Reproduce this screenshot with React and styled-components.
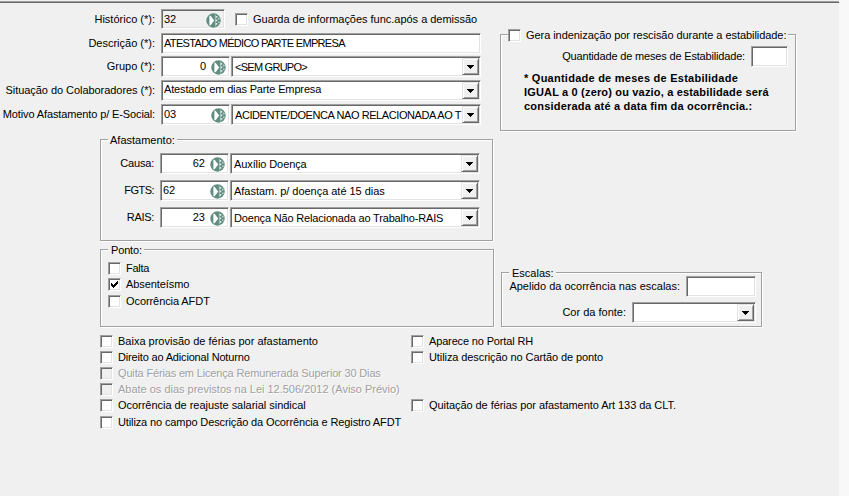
import styled, { createGlobalStyle } from "styled-components";

const LookupIcon = () => (
  <Lookup viewBox="0 0 15 15" aria-hidden="true">
    <circle cx="7.5" cy="7.5" r="7.2" fill="#5f8c7f" />
    <path d="M3.4 2.8 L4.6 2.8 L8.2 7.5 L4.6 12.2 L3.4 12.2 Z" fill="#fff" />
    <path d="M9.4 1.6 V13.4" stroke="#b9cec7" strokeWidth="0.8" />
    <path
      d="M9.8 3h1.5v1.7H9.8zM9.8 6.5h1.5v1.8H9.8zM9.8 10.1h1.5v1.7H9.8zM12.3 4.8h1.1v1.6h-1.1zM12.3 8.4h1.1v1.6h-1.1z"
      fill="#e4edea"
    />
  </Lookup>
);

const Check = ({ label, track, checked, disabled, row, column }) => (
  <CheckLabel $disabled={disabled} $row={row} $column={column}>
    <CheckBox $disabled={disabled}>
      {checked && (
        <svg width="7" height="7" viewBox="0 0 7 7" shapeRendering="crispEdges">
          <path
            d="M0 2h1v1h1v1h1V3h1V2h1V1h1V0h1v3H6v1H5v1H4v1H3v1H2V6H1V5H0z"
            fill="#000"
          />
        </svg>
      )}
    </CheckBox>
    <Text $track={track}>{label}</Text>
  </CheckLabel>
);

const Combo = ({ value, track, width, lift }) => (
  <Field $width={width}>
    <ComboText $track={track} $lift={lift}>
      {value}
    </ComboText>
    <ComboButton>
      <svg width="7" height="4" viewBox="0 0 7 4" shapeRendering="crispEdges">
        <path d="M0 0h7v1H6v1H5v1H4v1H3V3H2V2H1V1H0z" fill="#000" />
      </svg>
    </ComboButton>
  </Field>
);

const Code = ({ value, alignRight, disabled, width, height }) => (
  <Field $width={width} $height={height} $disabled={disabled}>
    <CodeText $right={alignRight}>{value}</CodeText>
    <LookupIcon />
  </Field>
);

const App = () => (
  <>
    <GlobalStyle />
    <Page>
      <Panel>
        <Columns>
          <LeftColumn>
            <Row $height={24}>
              <Label>Histórico (*):</Label>
              <Code value="32" width={64} height={20} disabled />
              <RowCheck>
                <Check label="Guarda de informações func.após a demissão" track={-0.02} />
              </RowCheck>
            </Row>
            <Row $height={23}>
              <Label>Descrição (*):</Label>
              <Field $width={320}>
                <CodeText $track={-0.67}>ATESTADO MÉDICO PARTE EMPRESA</CodeText>
              </Field>
            </Row>
            <Row $height={24}>
              <Label>Grupo (*):</Label>
              <Code value="0" width={69} alignRight />
              <Combo value="<SEM GRUPO>" track={-0.74} width={250} />
            </Row>
            <Row $height={24}>
              <Label $track={-0.05}>Situação do Colaboradores (*):</Label>
              <Combo value="Atestado em dias Parte Empresa" track={-0.14} width={320} lift />
            </Row>
            <Row $height={21}>
              <Label $track={-0.12}>Motivo Afastamento p/ E-Social:</Label>
              <Code value="03" width={69} />
              <Combo
                value="ACIDENTE/DOENCA NAO RELACIONADA AO T"
                track={-0.42}
                width={250}
              />
            </Row>

            <LeaveGroup>
              <Legend>Afastamento:</Legend>
              <LeaveRows>
                <Row $height={21}>
                  <Label $width={53} $track={-0.2}>Causa:</Label>
                  <Code value="62" width={69} alignRight />
                  <Combo value="Auxílio Doença" track={-0.1} width={250} />
                </Row>
                <Row $height={21}>
                  <Label $width={53} $track={-0.55}>FGTS:</Label>
                  <Code value="62" width={69} />
                  <Combo value="Afastam. p/ doença até 15 dias" track={-0.03} width={250} />
                </Row>
                <Row $height={21}>
                  <Label $width={53} $track={-0.3}>RAIS:</Label>
                  <Code value="23" width={69} alignRight />
                  <Combo
                    value="Doença Não Relacionada ao Trabalho-RAIS"
                    track={-0.17}
                    width={250}
                  />
                </Row>
              </LeaveRows>
            </LeaveGroup>

            <ClockGroup>
              <WideLegend $track={-0.15}>Ponto:</WideLegend>
              <ClockChecks>
                <Check label="Falta" track={-0.3} />
                <Check label="Absenteísmo" track={-0.08} checked />
                <Check label="Ocorrência AFDT" track={-0.08} />
              </ClockChecks>
            </ClockGroup>
          </LeftColumn>

          <RightColumn>
            <StabilityGroup>
              <CheckLegend>
                <Check
                  label="Gera indenização por rescisão durante a estabilidade:"
                  track={-0.06}
                />
              </CheckLegend>
              <MonthsRow>
                <Label $track={-0.17}>Quantidade de meses de Estabilidade:</Label>
                <Field $width={37} />
              </MonthsRow>
              <Note>
                <NoteLine $track={0.25}>* Quantidade de meses de Estabilidade</NoteLine>
                <NoteLine $track={0.17}>
                  IGUAL a 0 (zero) ou vazio, a estabilidade será
                </NoteLine>
                <NoteLine $track={0.2}>considerada até a data fim da ocorrência.:</NoteLine>
              </Note>
            </StabilityGroup>

            <ScheduleGroup>
              <WideLegend>Escalas:</WideLegend>
              <ScheduleRows>
                <Row $height={26}>
                  <Label $width={178}>Apelido da ocorrência nas escalas:</Label>
                  <Field $width={70} />
                </Row>
                <Row $height={21}>
                  <Label $width={124}>Cor da fonte:</Label>
                  <Combo width={124} />
                </Row>
              </ScheduleRows>
            </ScheduleGroup>
          </RightColumn>
        </Columns>

        <Options>
          <Check label="Baixa provisão de férias por afastamento" row={1} />
          <Check label="Aparece no Portal RH" track={-0.15} row={1} column={2} />
          <Check label="Direito ao Adicional Noturno" track={-0.17} row={2} />
          <Check
            label="Utiliza descrição no Cartão de ponto"
            track={-0.09}
            row={2}
            column={2}
          />
          <Check
            label="Quita Férias em Licença Remunerada Superior 30 Dias"
            track={-0.16}
            row={3}
            disabled
          />
          <Check
            label="Abate os dias previstos na Lei 12.506/2012 (Aviso Prévio)"
            track={-0.01}
            row={4}
            disabled
          />
          <Check label="Ocorrência de reajuste salarial sindical" track={-0.03} row={5} />
          <Check
            label="Quitação de férias por afastamento Art 133 da CLT."
            track={-0.06}
            row={5}
            column={2}
          />
          <Check
            label="Utiliza no campo Descrição da Ocorrência e Registro AFDT"
            track={-0.12}
            row={6}
          />
        </Options>
      </Panel>
    </Page>
  </>
);

const GlobalStyle = createGlobalStyle`
  * {
    box-sizing: border-box;
  }

  body {
    margin: 0;
    background: #f8f8f8;
    color: #000;
    font-family: "Liberation Sans", Arial, sans-serif;
    font-size: 11px;
    line-height: 13px;
  }
`;

const Page = styled.div`
  width: 849px;
  height: 496px;
  overflow: hidden;
  padding-right: 10px;
`;

const Panel = styled.main`
  height: 100%;
  background: #f0f0f0;
  border-top: 1px solid #f0f0f0;
  box-shadow: inset 0 1px 0 #a0a0a0, inset 0 2px 0 #696969;
  padding-top: 2px;
`;

const Columns = styled.div`
  display: flex;
  height: 332px;
`;

const LeftColumn = styled.div`
  width: 500px;
  padding-top: 6px;
`;

const RightColumn = styled.div`
  padding-top: 31px;
`;

const Row = styled.div`
  display: flex;
  align-items: flex-start;
  height: ${({ $height }) => $height}px;
`;

const Text = styled.span`
  letter-spacing: ${({ $track }) => $track || 0}px;
  white-space: nowrap;
`;

const Label = styled(Text)`
  width: ${({ $width }) => $width || 155}px;
  margin-right: 6px;
  padding-top: 4px;
  flex-shrink: 0;
  text-align: right;
`;

const Field = styled.div`
  display: flex;
  flex-shrink: 0;
  width: ${({ $width }) => $width}px;
  height: ${({ $height }) => $height || 21}px;
  padding: 1px;
  border: 1px solid;
  border-color: #a0a0a0 #fff #fff #a0a0a0;
  box-shadow: inset 1px 1px 0 #696969, inset -1px -1px 0 #e3e3e3;
  background: ${({ $disabled }) => ($disabled ? "#f0f0f0" : "#fff")};

  & + & {
    margin-left: 1px;
  }
`;

const CodeText = styled(Text)`
  flex: 1;
  padding: 2px 5px 0 1px;
  text-align: ${({ $right }) => ($right ? "right" : "left")};
`;

const Lookup = styled.svg`
  width: 15px;
  height: 15px;
  margin: 2px 2px 0 0;
  flex-shrink: 0;
`;

const ComboText = styled(Text)`
  flex: 1;
  min-width: 0;
  overflow: hidden;
  padding: ${({ $lift }) => ($lift ? "1px 0 0 1px" : "3px 0 0 2px")};
`;

const ComboButton = styled.div`
  display: flex;
  align-items: center;
  justify-content: center;
  width: 17px;
  height: 17px;
  flex-shrink: 0;
  border: 1px solid;
  border-color: #e3e3e3 #696969 #696969 #e3e3e3;
  box-shadow: inset 1px 1px 0 #fff, inset -1px -1px 0 #a0a0a0;
  background: #f0f0f0;
`;

const RowCheck = styled.div`
  margin: 4px 0 0 10px;
`;

const CheckLabel = styled.label`
  display: flex;
  gap: 5px;
  height: 13px;
  color: ${({ $disabled }) => ($disabled ? "#a0a0a0" : "inherit")};
  text-shadow: ${({ $disabled }) => ($disabled ? "1px 1px 0 #fff" : "none")};
  ${({ $row, $column }) => $row && `grid-area: ${$row} / ${$column || 1};`}
`;

const CheckBox = styled.span`
  display: flex;
  align-items: center;
  justify-content: center;
  width: 13px;
  height: 13px;
  flex-shrink: 0;
  border: 1px solid;
  border-color: #a0a0a0 #fff #fff #a0a0a0;
  box-shadow: inset 1px 1px 0 #696969, inset -1px -1px 0 #e3e3e3;
  background: ${({ $disabled }) => ($disabled ? "#f0f0f0" : "#fff")};
`;

const GroupBox = styled.section`
  display: flex;
  flex-direction: column;
  border: 1px solid #a0a0a0;
  box-shadow: 1px 1px 0 #fff, inset 1px 1px 0 #fff;
`;

const Legend = styled(Text)`
  align-self: flex-start;
  height: 13px;
  margin: -6px 0 0 7px;
  padding: 0 2px;
  background: #f0f0f0;
`;

const WideLegend = styled(Legend)`
  padding-left: 3px;
`;

const CheckLegend = styled.div`
  align-self: flex-start;
  margin: -6px 0 0 7px;
  padding-right: 2px;
  background: #f0f0f0;
`;

const LeaveGroup = styled(GroupBox)`
  width: 393px;
  height: 102px;
  margin: 14px 0 0 100px;
`;

const LeaveRows = styled.div`
  display: grid;
  gap: 6px;
  padding-top: 6px;
`;

const ClockGroup = styled(GroupBox)`
  width: 394px;
  height: 78px;
  margin: 8px 0 0 100px;
`;

const ClockChecks = styled.div`
  display: grid;
  grid-template-rows: 16px 17px 13px;
  padding: 5px 0 0 7px;
`;

const StabilityGroup = styled(GroupBox)`
  width: 296px;
  height: 97px;
`;

const MonthsRow = styled.div`
  display: flex;
  justify-content: flex-end;
  padding: 4px 7px 0 0;

  ${Label} {
    width: auto;
  }
`;

const Note = styled.div`
  padding: 4px 0 0 23px;
  font-weight: bold;
  line-height: 14px;
`;

const NoteLine = styled(Text)`
  display: block;
`;

const ScheduleGroup = styled(GroupBox)`
  width: 261px;
  height: 55px;
  margin: 141px 0 0 1px;
`;

const ScheduleRows = styled.div`
  margin-top: -4px;
`;

const Options = styled.div`
  display: grid;
  grid-template-columns: 311px auto;
  grid-template-rows: repeat(4, 16px) 17px 13px;
  padding-left: 100px;
`;

export default App;
